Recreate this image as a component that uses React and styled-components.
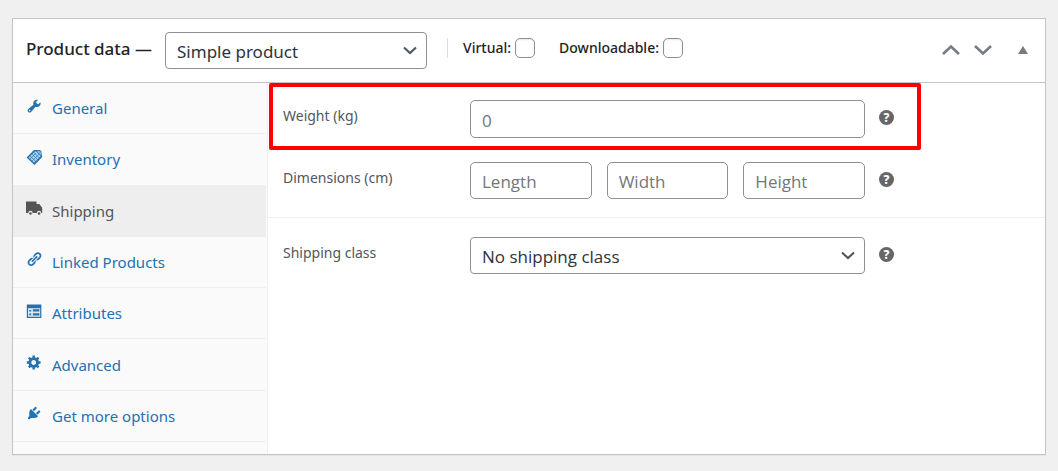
import { useState } from "react";
import styled, { createGlobalStyle } from "styled-components";

const GlobalStyle = createGlobalStyle`
  *, *::before, *::after {
    box-sizing: border-box;
  }
  body {
    margin: 0;
    background: #f0f0f1;
    color: #2c3338;
    font-family: "Noto Sans", "Open Sans", sans-serif;
    font-size: 14px;
    line-height: 20px;
  }
  input, select, button {
    font-family: inherit;
    margin: 0;
  }
`;

const Page = styled.main`
  padding: 18px 12px 16px;
`;

const Box = styled.section`
  background: #fff;
  border: 1px solid #c3c4c7;
  box-shadow: 0 1px 1px rgba(0, 0, 0, 0.04);
`;

const Header = styled.header`
  display: flex;
  align-items: flex-start;
  padding: 13px 16px 13px 13px;
  border-bottom: 1px solid #c3c4c7;
`;

const Title = styled.h2`
  margin: 0 13px 0 0;
  padding: 7px 0;
  color: #1d2327;
  font-size: 17px;
  font-weight: 500;
  line-height: 20px;
  white-space: nowrap;
`;

const SelectWrap = styled.div`
  position: relative;
  flex: 0 1 ${(props) => props.$width};
  min-width: 0;

  svg {
    position: absolute;
    top: 14px;
    right: 10px;
    pointer-events: none;
  }
`;

const Select = styled.select`
  appearance: none;
  width: 100%;
  height: 37px;
  padding: 1px 32px 0 11px;
  border: 1px solid #8c8f94;
  border-radius: 4px;
  background: #fff;
  color: #2c3338;
  font-family: ${(props) => (props.$wide ? '"Noto Sans"' : '"Open Sans"')}, sans-serif;
  font-size: 17px;
`;

const Types = styled.div`
  display: flex;
  gap: 24px;
  margin: 6px 0 0 20px;
  padding-left: 15px;
  border-left: 1px solid #dcdcde;
`;

const TypeLabel = styled.label`
  display: flex;
  align-items: center;
  gap: 4px;
  color: #1d2327;
  font-weight: 500;
`;

const Checkbox = styled.input`
  appearance: none;
  width: 20px;
  height: 20px;
  border: 1px solid #8c8f94;
  border-radius: 5px;
  background: #fff;
  box-shadow: inset 0 1px 2px rgba(0, 0, 0, 0.1);

  &:checked {
    background: #3582c4;
  }
`;

const Actions = styled.div`
  display: flex;
  align-items: center;
  gap: 14px;
  margin: 9px 0 0 auto;
`;

const IconButton = styled.button`
  display: flex;
  padding: 0;
  border: 0;
  background: none;
  color: #787c82;
  cursor: pointer;

  &:last-child {
    margin-left: 11px;
  }
`;

const Body = styled.div`
  display: flex;
  min-height: 371px;
`;

const Tabs = styled.ul`
  display: flex;
  flex-direction: column;
  flex: 0 0 255px;
  margin: 0;
  padding: 0 1px 12px 0;
  border-right: 1px solid #eee;
  background: #fafafa;
  list-style: none;
`;

const Tab = styled.li`
  display: flex;
  flex: 1;
  border-bottom: 1px solid #eee;
  background: ${(props) => (props.$active ? "#eee" : "transparent")};
`;

const TabLink = styled.a`
  display: flex;
  flex: 1;
  align-items: center;
  gap: 9px;
  padding: 0 13px;
  color: ${(props) => (props.$active ? "#555" : "#2271b1")};
  font-size: 15px;
  text-decoration: none;

  svg {
    flex: none;
    margin-bottom: 4px;
  }
`;

const Panel = styled.div`
  flex: 1;
  min-width: 0;
`;

const Group = styled.div`
  padding: ${(props) => (props.$first ? "0 0 18px" : "19px 0")};

  & + & {
    border-top: 1px solid #eee;
  }
`;

const Row = styled.div`
  display: flex;
  align-items: flex-start;
  padding: 0 15px;
`;

const HighlightedRow = styled(Row)`
  width: 652px;
  max-width: 100%;
  margin: 0 0 12px 1px;
  padding: 13px 10px 8px;
  border: 4px solid #fe0000;
  border-radius: 2px;
`;

const FieldLabel = styled.label`
  flex: 0 0 187px;
  padding-top: 6px;
  color: #50575e;
`;

const Fields = styled.div`
  display: flex;
  flex: 0 1 395px;
  gap: 15px;
  min-width: 0;
`;

const TextInput = styled.input`
  flex: 1;
  min-width: 0;
  height: ${(props) => (props.$tall ? "38px" : "37px")};
  padding: 2px 11px 0;
  border: 1px solid #8c8f94;
  border-radius: 5px;
  background: #fff;
  color: #2c3338;
  font-family: "Open Sans", sans-serif;
  font-size: 17px;

  &::placeholder {
    color: #72777c;
    opacity: 1;
  }
`;

const Help = styled.button`
  flex: none;
  width: 15px;
  height: 15px;
  margin: 10px 0 0 14px;
  padding: 0;
  border: 0;
  border-radius: 50%;
  background: #666;
  color: #fff;
  font-size: 12px;
  font-weight: 800;
  line-height: 15px;
  text-align: center;
  cursor: help;
`;

const WrenchIcon = () => (
  <path d="M16.68 9.77c-1.34 1.34-3.3 1.67-4.95.99l-5.41 6.52c-.99.99-2.59.99-3.58 0s-.99-2.59 0-3.57l6.52-5.42c-.68-1.65-.35-3.61.99-4.95 1.28-1.28 3.12-1.62 4.72-1.06l-2.89 2.89 2.82 2.82 2.86-2.87c.53 1.58.18 3.39-1.08 4.65zM3.81 16.21c.4.39 1.04.39 1.43 0 .4-.4.4-1.04 0-1.43-.39-.4-1.03-.4-1.43 0-.39.39-.39 1.03 0 1.43z" />
);

const TagIcon = () => (
  <g fill="none" stroke="currentColor">
    <path
      d="M2 10.5L10.5 2L17 2.500L19 9.500L10.500 18.500Z"
      fill="currentColor"
      fillOpacity="0.3"
      strokeWidth="1.800"
      strokeLinejoin="round"
    />
    <path d="M4.500 8l8.500 8.500M6.800 5.700l8.500 8.500M9 3.500l8.500 8.500M4.500 13l8-8M7 15.500l9-9M9.500 18l9-9" strokeWidth="0.900" />
    <path d="M12.500 2.500L18.500 8.500V2.500z" fill="#fafafa" strokeWidth="1.200" />
    <circle cx="16.500" cy="4.700" r="0.800" strokeWidth="0.800" />
  </g>
);

const TruckIcon = () => (
  <>
    <path d="M0 2h13v3h3.500l3.500 4.500v6.500h-1.200a2.700 2.700 0 0 0-5.400 0H8.200a2.700 2.700 0 0 0-5.400 0H0z" />
    <circle cx="5.500" cy="16.600" r="1.600" />
    <circle cx="16.100" cy="16.600" r="1.600" />
  </>
);

const LinkIcon = () => (
  <path d="M17.74 2.76c1.68 1.69 1.68 4.41 0 6.1l-1.53 1.52c-1.12 1.12-2.7 1.47-4.14 1.09l2.62-2.61.76-.77.76-.76c.84-.84.84-2.2 0-3.04-.84-.85-2.2-.85-3.04 0l-.77.76-3.38 3.38c-.37-1.44-.02-3.02 1.1-4.14l1.52-1.53c1.69-1.68 4.42-1.68 6.1 0zM8.59 13.43l5.34-5.34c.42-.42.42-1.1 0-1.52-.44-.43-1.13-.39-1.53 0l-5.33 5.34c-.42.42-.42 1.1 0 1.52.44.43 1.13.39 1.52 0zm-.76 2.29l4.14-4.15c.38 1.44.03 3.02-1.09 4.14l-1.52 1.53c-1.69 1.68-4.41 1.68-6.1 0-1.68-1.68-1.68-4.42 0-6.1l1.53-1.52c1.12-1.12 2.7-1.47 4.14-1.1l-4.14 4.15c-.85.84-.85 2.2 0 3.05.84.84 2.2.84 3.04 0z" />
);

const CardIcon = () => (
  <>
    <path fillRule="evenodd" d="M1 2h18v16.500H1zM2.500 6.500v10.500h15V6.500z" />
    <path d="M2.500 6.500h15v10.500h-15z" fillOpacity="0.120" />
    <path d="M4 8.500h2.500v2H4zM4 13h2.500v2H4zM8.500 7.800h8v2.700h-8zM8.500 12.700h8v2.700h-8z" />
  </>
);

const GearIcon = () => (
  <path d="M18 12h-2.18c-.17.7-.44 1.35-.81 1.93l1.54 1.54-2.1 2.1-1.54-1.54c-.58.36-1.23.63-1.91.79V19H8v-2.18c-.68-.16-1.33-.43-1.91-.79l-1.54 1.54-2.12-2.12 1.54-1.54c-.36-.58-.63-1.23-.79-1.91H1V9.03h2.17c.16-.7.44-1.35.8-1.94L2.43 5.55l2.1-2.1 1.54 1.54c.58-.37 1.24-.64 1.93-.81V2h3v2.18c.68.16 1.33.43 1.91.79l1.54-1.54 2.12 2.12-1.54 1.54c.36.59.64 1.24.8 1.94H18V12zm-8.5 1.5c1.66 0 3-1.34 3-3s-1.34-3-3-3-3 1.34-3 3 1.34 3 3 3z" />
);

const PlugIcon = () => (
  <path d="M13.11 4.36L9.87 7.6 8 5.73l3.24-3.24c.35-.34 1.05-.2 1.56.32.52.51.66 1.21.31 1.55zm-8 1.77l.91-1.12 9.01 9.01-1.19.84c-.71.71-2.63 1.16-3.82 1.16H6.14L4.9 17.26c-.59.59-1.54.59-2.12 0-.59-.58-.59-1.53 0-2.12l1.24-1.24v-3.88c0-1.13.4-3.19 1.09-3.89zm7.26 3.97l3.24-3.24c.34-.35 1.04-.21 1.55.31.52.51.66 1.21.31 1.55l-3.24 3.25z" />
);

const tabs = [
  { id: "general", label: "General", Icon: WrenchIcon },
  { id: "inventory", label: "Inventory", Icon: TagIcon },
  { id: "shipping", label: "Shipping", Icon: TruckIcon },
  { id: "linked", label: "Linked Products", Icon: LinkIcon },
  { id: "attributes", label: "Attributes", Icon: CardIcon },
  { id: "advanced", label: "Advanced", Icon: GearIcon },
  { id: "more", label: "Get more options", Icon: PlugIcon },
];

function Chevron({ up, width, height, color = "currentColor", stroke = 2 }) {
  return (
    <svg width={width} height={height} viewBox="0 0 18 12" fill="none" aria-hidden="true">
      <path
        d={up ? "M1 10L9 2.500L17 10" : "M1 2L9 9.500L17 2"}
        stroke={color}
        strokeWidth={stroke}
      />
    </svg>
  );
}

function Dropdown({ width, wide, children, ...rest }) {
  return (
    <SelectWrap $width={width}>
      <Select $wide={wide} {...rest}>
        {children}
      </Select>
      <Chevron width={14} height={9} color="#50575e" stroke={2.8} />
    </SelectWrap>
  );
}

function App() {
  const [active, setActive] = useState("shipping");

  return (
    <Page>
      <GlobalStyle />
      <Box>
        <Header>
          <Title>Product data —</Title>
          <Dropdown width="262px" wide aria-label="Product type">
            <option>Simple product</option>
            <option>Grouped product</option>
            <option>Variable product</option>
          </Dropdown>
          <Types>
            <TypeLabel>
              Virtual:
              <Checkbox type="checkbox" />
            </TypeLabel>
            <TypeLabel>
              Downloadable:
              <Checkbox type="checkbox" />
            </TypeLabel>
          </Types>
          <Actions>
            <IconButton aria-label="Move up">
              <Chevron up width={18} height={18} stroke={2.6} />
            </IconButton>
            <IconButton aria-label="Move down">
              <Chevron width={18} height={18} stroke={2.6} />
            </IconButton>
            <IconButton aria-label="Toggle panel">
              <svg width="12" height="8" viewBox="0 0 12 8" fill="currentColor">
                <path d="M6 0L11 8H1z" />
              </svg>
            </IconButton>
          </Actions>
        </Header>
        <Body>
          <Tabs>
            {tabs.map(({ id, label, Icon }) => (
              <Tab key={id} $active={id === active}>
                <TabLink href={`#${id}`} $active={id === active} onClick={() => setActive(id)}>
                  <svg width="17" height="17" viewBox="0 0 21 21" fill="currentColor" aria-hidden="true">
                    <Icon />
                  </svg>
                  {label}
                </TabLink>
              </Tab>
            ))}
          </Tabs>
          <Panel>
            <Group $first>
              <HighlightedRow>
                <FieldLabel htmlFor="weight">Weight (kg)</FieldLabel>
                <Fields>
                  <TextInput id="weight" placeholder="0" $tall />
                </Fields>
                <Help aria-label="Weight help">?</Help>
              </HighlightedRow>
              <Row>
                <FieldLabel htmlFor="length">Dimensions (cm)</FieldLabel>
                <Fields>
                  <TextInput id="length" placeholder="Length" />
                  <TextInput aria-label="Width" placeholder="Width" />
                  <TextInput aria-label="Height" placeholder="Height" />
                </Fields>
                <Help aria-label="Dimensions help">?</Help>
              </Row>
            </Group>
            <Group>
              <Row>
                <FieldLabel htmlFor="shipping-class">Shipping class</FieldLabel>
                <Dropdown width="395px" id="shipping-class">
                  <option>No shipping class</option>
                </Dropdown>
                <Help aria-label="Shipping class help">?</Help>
              </Row>
            </Group>
          </Panel>
        </Body>
      </Box>
    </Page>
  );
}

export default App;
